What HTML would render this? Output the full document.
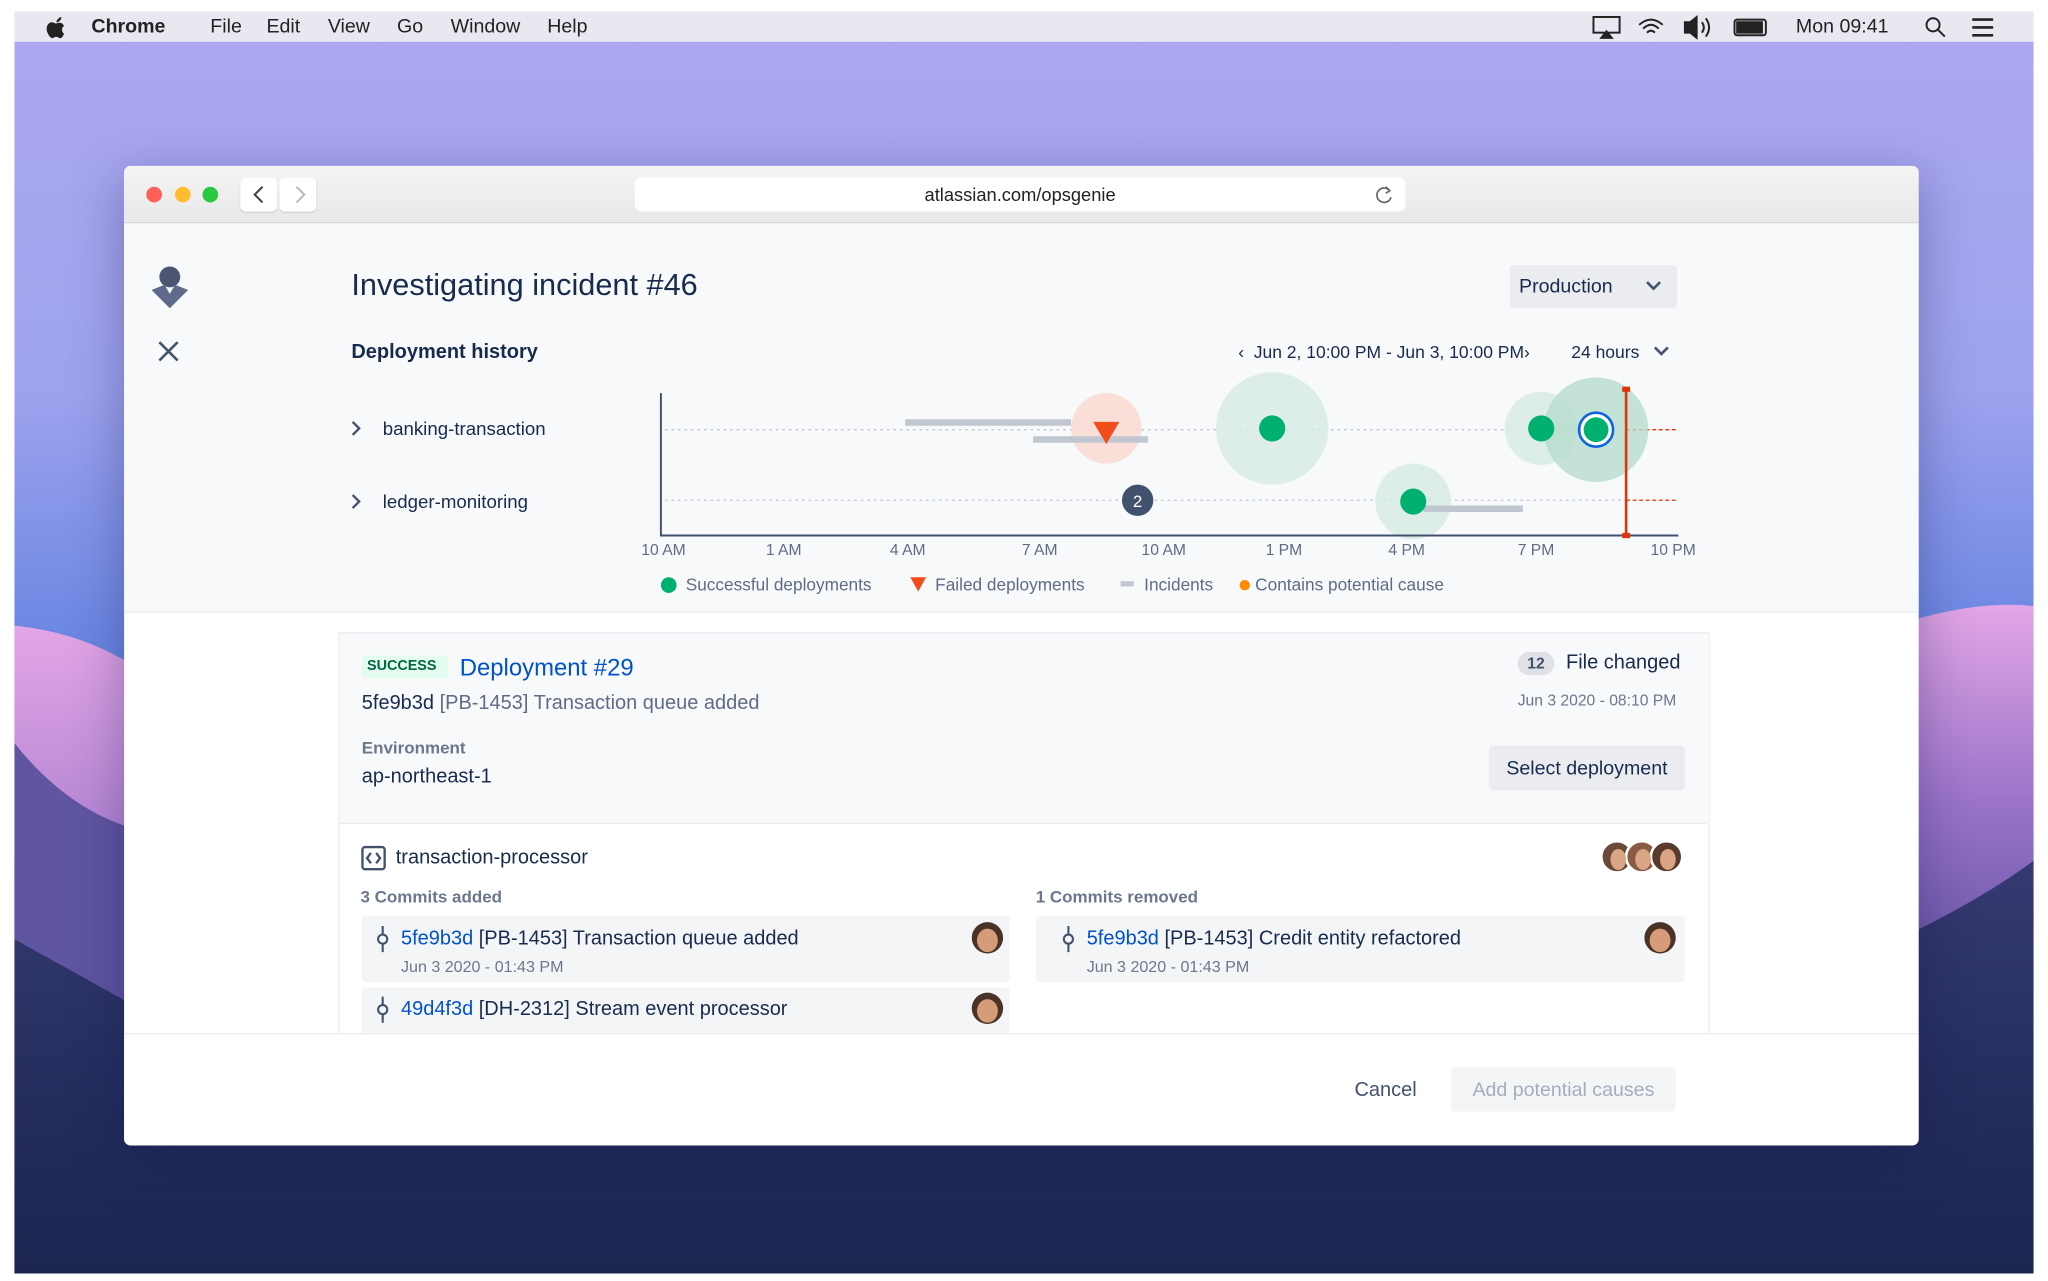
<!DOCTYPE html>
<html><head><meta charset="utf-8"><style>
html,body{margin:0;padding:0;width:2048px;height:1281px;overflow:hidden;background:#fff}
#w{position:absolute;left:0;top:0;width:1568px;height:981px;transform:scale(1.30612);transform-origin:0 0;font-family:"Liberation Sans",sans-serif;color:#172b4d}
.a{position:absolute}
.t{position:absolute;white-space:nowrap}
</style></head><body><div id="w">
<svg class="a" style="left:11px;top:9px" width="1546" height="966">
<defs>
<linearGradient id="sky" x1="0" y1="0" x2="0" y2="1">
<stop offset="0" stop-color="#aca7f0"/><stop offset="0.3" stop-color="#9ea3ee"/><stop offset="0.5" stop-color="#6a86e2"/><stop offset="0.62" stop-color="#5577dc"/><stop offset="1" stop-color="#4a6bd6"/></linearGradient>
<linearGradient id="pk" x1="0" y1="0" x2="0" y2="1"><stop offset="0" stop-color="#e3a6e6"/><stop offset="0.5" stop-color="#9a73c9"/><stop offset="1" stop-color="#5a4f9d"/></linearGradient>
<linearGradient id="nv" x1="0" y1="0" x2="0" y2="1"><stop offset="0" stop-color="#353a72"/><stop offset="0.5" stop-color="#262f5f"/><stop offset="1" stop-color="#1b2550"/></linearGradient>
</defs>
<rect width="1546" height="966" fill="url(#sky)"/>
<path d="M0 470 Q50 475 90 500 L90 966 L0 966 Z" fill="url(#pk)"/>
<path d="M1440 470 Q1500 450 1546 455 L1546 700 Q1500 740 1460 760 Z" fill="url(#pk)"/>
<path d="M0 650 Q200 720 500 760 Q900 790 1300 760 Q1450 720 1546 650 L1546 966 L0 966 Z" fill="url(#nv)"/>
<path d="M0 560 Q40 610 90 625 L90 760 L0 710 Z" fill="#5f55a0"/>
<rect width="1546" height="23" fill="#e9e8f0"/>
</svg>
<svg class="a" style="left:35px;top:12px" width="16" height="18"><path d="M8 5 C9 2 11 1 12 1 C12 3 11 4 9 5 Z M8 6 C10 5 13 5 14 8 C12 9 12 12 14 14 C13 16 12 18 10 17 C9 16 7 16 6 17 C4 18 2 15 1 12 C0 8 2 5 5 5 C6 5 7 6 8 6Z" fill="#222"/></svg>
<div class="t" style="left:70px;top:12px;font-size:15px;font-weight:bold;color:#222">Chrome</div>
<div class="t" style="left:161px;top:12px;font-size:15px;color:#222">File</div>
<div class="t" style="left:204px;top:12px;font-size:15px;color:#222">Edit</div>
<div class="t" style="left:251px;top:12px;font-size:15px;color:#222">View</div>
<div class="t" style="left:304px;top:12px;font-size:15px;color:#222">Go</div>
<div class="t" style="left:345px;top:12px;font-size:15px;color:#222">Window</div>
<div class="t" style="left:419px;top:12px;font-size:15px;color:#222">Help</div>
<div class="t" style="left:1375px;top:12px;font-size:15px;color:#222">Mon 09:41</div>
<svg class="a" style="left:1218px;top:11px" width="320" height="20" fill="none" stroke="#222" stroke-width="1.5">
<rect x="2" y="2" width="20" height="12"/><path d="M8 18 L12 13 L16 18Z" fill="#222"/>
<path d="M37 8 Q46 0 55 8 M40 11 Q46 5 52 11 M43 14 Q46 11 49 14"/>
<path d="M72 6 H76 L81 2 V18 L76 14 H72Z" fill="#222"/><path d="M85 6 Q88 10 85 14 M88 3 Q93 10 88 17"/>
<rect x="110" y="4" width="24" height="12" rx="2"/><rect x="112" y="6" width="19" height="8" fill="#222"/>
<circle cx="262" cy="8" r="5"/><path d="M266 12 L271 17"/>
<path d="M292 4H308M292 10H308M292 16H308" stroke-width="2"/>
</svg>
<div class="a" style="left:95px;top:127px;width:1374px;height:750px;background:#fff;border-radius:5px;box-shadow:0 10px 40px rgba(20,20,80,.35);overflow:hidden">
 <div class="a" style="left:0;top:0;width:1374px;height:43px;background:linear-gradient(#f4f4f4,#e8e8e8);border-bottom:1px solid #d6d6d6"></div>
 <div class="a" style="left:17px;top:16px;width:12px;height:12px;border-radius:50%;background:#fe5f57"></div>
 <div class="a" style="left:39px;top:16px;width:12px;height:12px;border-radius:50%;background:#febc2e"></div>
 <div class="a" style="left:60px;top:16px;width:12px;height:12px;border-radius:50%;background:#28c840"></div>
 <div class="a" style="left:89px;top:9px;width:28px;height:26px;background:#fff;border-radius:4px;box-shadow:0 1px 1px rgba(0,0,0,.1)"></div>
 <div class="a" style="left:119px;top:9px;width:28px;height:26px;background:#fff;border-radius:4px;box-shadow:0 1px 1px rgba(0,0,0,.1)"></div>
 <svg class="a" style="left:89px;top:9px" width="60" height="26" fill="none" stroke-width="1.6"><path d="M17 7 L11 13 L17 19" stroke="#444"/><path d="M43 7 L49 13 L43 19" stroke="#bbb"/></svg>
 <div class="a" style="left:391px;top:9px;width:590px;height:26px;background:#fff;border-radius:5px"></div>
 <div class="t" style="left:391px;width:590px;top:14px;text-align:center;font-size:14px;color:#222">atlassian.com/opsgenie</div>
 <svg class="a" style="left:957px;top:13px" width="16" height="18" fill="none" stroke="#666" stroke-width="1.3"><path d="M12 6 A5.5 5.5 0 1 0 13 11"/><path d="M9 3 L12 6 L9 8"/></svg>
 <div class="a" style="left:0;top:44px;width:1374px;height:297px;background:#f8f9fa;border-bottom:1px solid #ebecf0"></div>
 <svg class="a" style="left:20px;top:76px" width="30" height="34"><circle cx="15" cy="9" r="8" fill="#4a5672"/><path d="M1 19 L11 15 L15 22 L19 15 L29 19 L15 33 Z" fill="#5e6b8a"/></svg>
 <svg class="a" style="left:26px;top:134px" width="16" height="16" stroke="#42526e" stroke-width="2"><path d="M1 1L15 15M15 1L1 15"/></svg>
 <div class="t" style="left:174px;top:78px;font-size:23.5px;color:#172b4d">Investigating incident #46</div>
 <div class="a" style="left:1061px;top:76px;width:128px;height:33px;background:#ebecf0;border-radius:3px"></div>
 <div class="t" style="left:1068px;top:84px;font-size:15px;color:#172b4d">Production</div>
 <svg class="a" style="left:1164px;top:87px" width="14" height="10" fill="none" stroke="#42526e" stroke-width="2"><path d="M2 2 L7 7 L12 2"/></svg>
 <div class="t" style="left:174px;top:134px;font-size:15.3px;font-weight:bold;color:#172b4d">Deployment history</div>
 <div class="t" style="left:853px;top:135px;font-size:13.4px;color:#172b4d">‹&nbsp;&nbsp;Jun 2, 10:00 PM - Jun 3, 10:00 PM›</div>
 <div class="t" style="left:1108px;top:135px;font-size:13.4px;color:#172b4d">24 hours</div>
 <svg class="a" style="left:1170px;top:137px" width="14" height="10" fill="none" stroke="#42526e" stroke-width="2"><path d="M2 2 L7 7 L12 2"/></svg>
 <svg class="a" style="left:172px;top:194px" width="10" height="80" fill="none" stroke="#42526e" stroke-width="1.8"><path d="M3 2 L8 7 L3 12 M3 58 L8 63 L3 68"/></svg>
 <div class="t" style="left:198px;top:194px;font-size:14.3px;color:#172b4d">banking-transaction</div>
 <div class="t" style="left:198px;top:250px;font-size:14.3px;color:#172b4d">ledger-monitoring</div>
 <svg class="a" style="left:0;top:0" width="1374" height="340">
  <g stroke="#c1c7d0" stroke-dasharray="2,3" stroke-width="1"><path d="M414 202H1150M414 256H1150"/></g>
  <g stroke="#de350b" stroke-dasharray="3,2" stroke-width="1"><path d="M1150 202H1190M1150 256H1190"/></g>
  <rect x="598" y="194" width="127" height="5" fill="#c1c7d0"/>
  <circle cx="752" cy="201" r="27" fill="#f9d8d0" opacity=".8"/>
  <rect x="696" y="207" width="88" height="5" fill="#c1c7d0"/>
  <path d="M742 196 H762 L752 213 Z" fill="#f24c1a"/>
  <circle cx="879" cy="201" r="43" fill="#d4ebe2" opacity=".8"/>
  <circle cx="879" cy="201" r="10" fill="#00b06f"/>
  <circle cx="1085" cy="201" r="28" fill="#d4ebe2" opacity=".8"/>
  <circle cx="1127" cy="202" r="40" fill="#b6dccd" opacity=".8"/>
  <circle cx="1085" cy="201" r="10" fill="#00b06f"/>
  <circle cx="1127" cy="202" r="13" fill="#fff" stroke="#0c66e4" stroke-width="2"/>
  <circle cx="1127" cy="202" r="9.5" fill="#00b06f"/>
  <circle cx="987" cy="257" r="29" fill="#d4ebe2" opacity=".8"/>
  <rect x="995" y="260" width="76" height="5" fill="#c1c7d0"/>
  <circle cx="987" cy="257" r="10" fill="#00b06f"/>
  <circle cx="776" cy="256" r="12" fill="#42526e"/>
  <text x="776" y="261" text-anchor="middle" font-size="13" fill="#fff" font-family="Liberation Sans">2</text>
  <path d="M411 174 V283 H1190" stroke="#42526e" stroke-width="1.5" fill="none"/>
  <path d="M1150 171 V283" stroke="#de350b" stroke-width="2"/>
  <rect x="1147" y="169" width="6" height="4" fill="#de350b"/><rect x="1147" y="281" width="6" height="4" fill="#de350b"/>
  <g font-size="12" fill="#5e6c84" font-family="Liberation Sans" text-anchor="middle">
   <text x="413" y="298">10 AM</text><text x="505" y="298">1 AM</text><text x="600" y="298">4 AM</text><text x="701" y="298">7 AM</text><text x="796" y="298">10 AM</text><text x="888" y="298">1 PM</text><text x="982" y="298">4 PM</text><text x="1081" y="298">7 PM</text><text x="1186" y="298">10 PM</text>
  </g>
  <circle cx="417" cy="321" r="6" fill="#00b06f"/>
  <path d="M602 315 H614 L608 326Z" fill="#f24c1a"/>
  <rect x="763" y="318" width="10" height="4" fill="#c1c7d0"/>
  <circle cx="858" cy="321" r="4" fill="#ff8b00"/>
  <g font-size="13.2" fill="#5e6c84" font-family="Liberation Sans">
   <text x="430" y="325">Successful deployments</text><text x="621" y="325">Failed deployments</text><text x="781" y="325">Incidents</text><text x="866" y="325">Contains potential cause</text>
  </g>
 </svg>
 <div class="a" style="left:164px;top:357px;width:1048px;height:308px;background:#fff;border:1px solid #ebecf0;border-bottom:none"></div>
 <div class="a" style="left:165px;top:358px;width:1047px;height:145px;background:#f8f9fa;border-bottom:1px solid #ebecf0"></div>
 <div class="a" style="left:182px;top:375px;width:66px;height:17px;background:#e3fcef;border-radius:3px"></div>
 <div class="t" style="left:186px;top:377px;font-size:11px;font-weight:bold;color:#006644">SUCCESS</div>
 <div class="t" style="left:257px;top:373px;font-size:18.3px;color:#0052cc">Deployment #29</div>
 <div class="t" style="left:182px;top:403px;font-size:15.3px;color:#5e6c84"><span style="color:#172b4d">5fe9b3d</span> [PB-1453] Transaction queue added</div>
 <div class="a" style="left:1067px;top:372px;width:28px;height:18px;background:#dfe1e6;border-radius:9px"></div>
 <div class="t" style="left:1067px;width:28px;text-align:center;top:374px;font-size:12px;font-weight:bold;color:#42526e">12</div>
 <div class="t" style="left:1104px;top:372px;font-size:15.3px;color:#172b4d">File changed</div>
 <div class="t" style="left:1067px;top:402px;font-size:12px;color:#6b778c">Jun 3 2020 - 08:10 PM</div>
 <div class="t" style="left:182px;top:438px;font-size:13px;font-weight:bold;color:#6b778c">Environment</div>
 <div class="t" style="left:182px;top:459px;font-size:15.3px;color:#172b4d">ap-northeast-1</div>
 <div class="a" style="left:1045px;top:444px;width:150px;height:34px;background:#ebecf0;border-radius:3px"></div>
 <div class="t" style="left:1045px;width:150px;text-align:center;top:453px;font-size:15px;color:#172b4d">Select deployment</div>
 <svg class="a" style="left:181px;top:520px" width="20" height="20" fill="none" stroke="#42526e" stroke-width="1.8"><rect x="1.5" y="1.5" width="17" height="17" rx="2"/><path d="M8 6 L5 10 L8 14 M12 6 L15 10 L12 14"/></svg>
 <div class="t" style="left:208px;top:521px;font-size:15.3px;color:#172b4d">transaction-processor</div>
 <svg class="a" style="left:1128px;top:515px" width="70" height="28">
  <g stroke="#fff" stroke-width="2"><circle cx="15" cy="14" r="12" fill="#6b4a3a"/><circle cx="34" cy="14" r="12" fill="#8a5a44"/><circle cx="53" cy="14" r="12" fill="#5a3a2c"/></g>
  <g fill="#d9a585"><ellipse cx="16" cy="16" rx="6" ry="8"/><ellipse cx="35" cy="16" rx="6" ry="8"/><ellipse cx="54" cy="16" rx="6" ry="8"/></g>
 </svg>
 <div class="t" style="left:181px;top:552px;font-size:13px;font-weight:bold;color:#6b778c">3 Commits added</div>
 <div class="t" style="left:698px;top:552px;font-size:13px;font-weight:bold;color:#6b778c">1 Commits removed</div>
 <div class="a" style="left:182px;top:574px;width:496px;height:51px;background:#f4f5f7;border-radius:3px"></div>
 <div class="a" style="left:182px;top:629px;width:496px;height:36px;background:#f4f5f7;border-radius:3px"></div>
 <div class="a" style="left:698px;top:574px;width:497px;height:51px;background:#f4f5f7;border-radius:3px"></div>
 <svg class="a" style="left:192px;top:582px" width="12" height="80" fill="none" stroke="#42526e" stroke-width="1.6"><path d="M6 0V6M6 14V20"/><circle cx="6" cy="10" r="3.5"/><path d="M6 54V60M6 68V74"/><circle cx="6" cy="64" r="3.5"/></svg>
 <svg class="a" style="left:717px;top:582px" width="12" height="24" fill="none" stroke="#42526e" stroke-width="1.6"><path d="M6 0V6M6 14V20"/><circle cx="6" cy="10" r="3.5"/></svg>
 <div class="t" style="left:212px;top:583px;font-size:15.3px;color:#172b4d"><span style="color:#0052cc">5fe9b3d</span> [PB-1453] Transaction queue added</div>
 <div class="t" style="left:212px;top:606px;font-size:12.3px;color:#6b778c">Jun 3 2020 - 01:43 PM</div>
 <div class="t" style="left:212px;top:637px;font-size:15.3px;color:#172b4d"><span style="color:#0052cc">49d4f3d</span> [DH-2312] Stream event processor</div>
 <div class="t" style="left:737px;top:583px;font-size:15.3px;color:#172b4d"><span style="color:#0052cc">5fe9b3d</span> [PB-1453] Credit entity refactored</div>
 <div class="t" style="left:737px;top:606px;font-size:12.3px;color:#6b778c">Jun 3 2020 - 01:43 PM</div>
 <svg class="a" style="left:648px;top:578px" width="600" height="80">
  <g><circle cx="13" cy="13" r="12" fill="#4a3226"/><ellipse cx="13" cy="15" rx="8" ry="9" fill="#d69c7a"/>
  <circle cx="13" cy="67" r="12" fill="#4a3226"/><ellipse cx="13" cy="69" rx="8" ry="9" fill="#d69c7a"/>
  <circle cx="528" cy="13" r="12" fill="#4a3226"/><ellipse cx="528" cy="15" rx="8" ry="9" fill="#d69c7a"/></g>
 </svg>
 <div class="a" style="left:0;top:664px;width:1374px;height:86px;background:#fff;border-top:1px solid #ebecf0"></div>
 <div class="t" style="left:942px;top:699px;font-size:15.3px;color:#42526e">Cancel</div>
 <div class="a" style="left:1016px;top:690px;width:172px;height:34px;background:#f4f5f7;border-radius:3px"></div>
 <div class="t" style="left:1016px;width:172px;text-align:center;top:699px;font-size:15px;color:#a5adba">Add potential causes</div>
</div>
</div></body></html>
